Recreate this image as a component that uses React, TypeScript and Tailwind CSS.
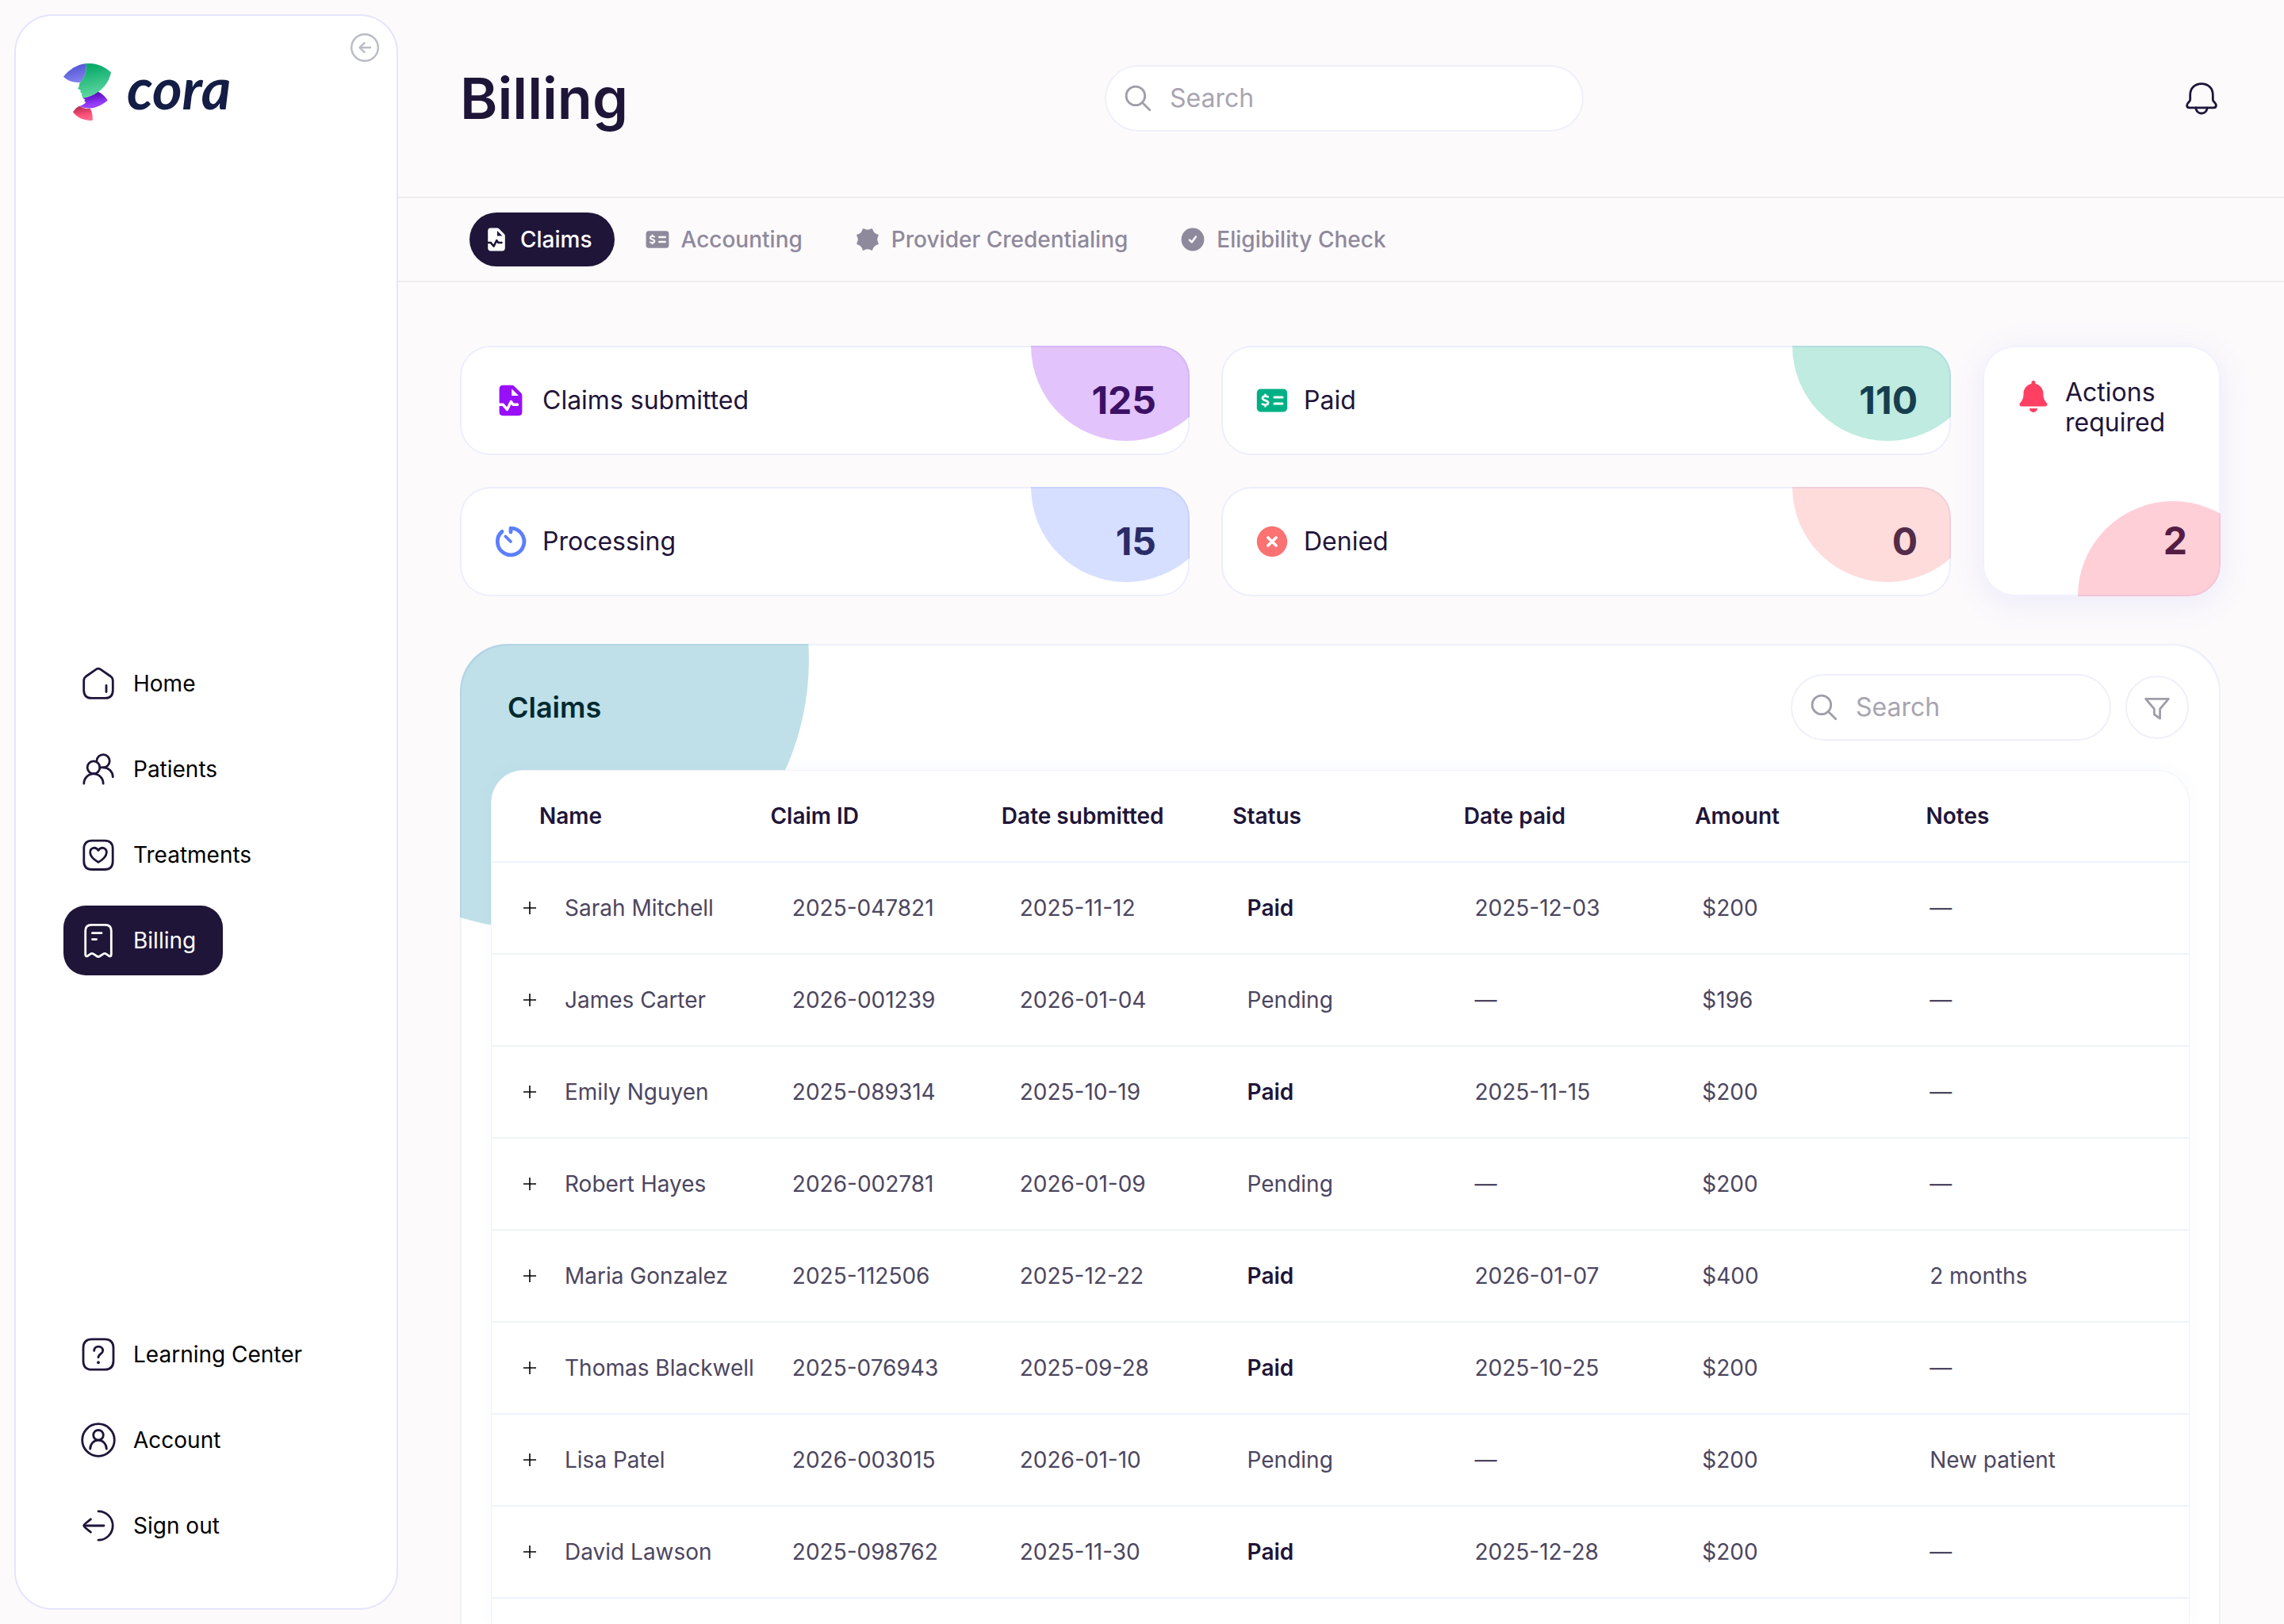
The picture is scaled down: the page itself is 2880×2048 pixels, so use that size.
import type { ReactNode } from 'react';
import clsx from 'clsx';
import { FaBell } from 'react-icons/fa6';

interface IconProps {
  className?: string;
}

function LineIcon({ className, children }: IconProps & { children: ReactNode }) {
  return (
    <svg
      className={clsx('size-12 shrink-0', className)}
      viewBox="0 0 48 48"
      fill="none"
      stroke="currentColor"
      strokeWidth="2.8"
      strokeLinecap="round"
      strokeLinejoin="round"
      aria-hidden="true"
    >
      {children}
    </svg>
  );
}

function HomeIcon() {
  return (
    <LineIcon>
      <path d="M21.2 6.1Q24 4.2 26.8 6.1L39.6 15Q42.3 17 42.3 20.4V32.4Q42.3 42.4 32.4 42.4H15.6Q5.7 42.4 5.7 32.4V20.4Q5.7 17 8.4 15Z" />
      <path d="M34 26.5V34.5" />
    </LineIcon>
  );
}

function PatientsIcon() {
  return (
    <LineIcon>
      <circle cx="18" cy="21.8" r="7.9" />
      <path d="M22 13.4A8.1 8.1 0 1 1 30.2 21.8" />
      <path d="M25.8 21.8H30.2A12.2 12.2 0 0 1 42.3 33.8" />
      <path d="M5.8 42.2A12.2 12.4 0 0 1 30.2 42.2" />
    </LineIcon>
  );
}

function TreatmentsIcon() {
  return (
    <LineIcon>
      <path d="M5.8 16.5Q5.8 6.2 16 6.2H32Q42.2 6.2 42.2 16.5V32.3Q42.2 42.5 32 42.5H16Q5.8 42.5 5.8 32.3Z" />
      <path d="M24 18.3C22 15.6 19.6 15 17.8 15.4C15 16 13.6 18.4 13.7 21.2C13.9 26.2 20 31 24 33.4C28 31 34.1 26.2 34.3 21.2C34.4 18.4 33 16 30.2 15.4C28.4 15 26 15.6 24 18.3Z" />
    </LineIcon>
  );
}

function BillingIcon() {
  return (
    <LineIcon>
      <path d="M7.7 41.5V12Q7.7 4.4 15.2 4.4H32.8Q40.3 4.4 40.3 12V41.5Q40.3 45.2 37 43.2L33.6 40.9Q32 39.8 30.4 40.9L25.6 44Q24 45.1 22.4 44L17.6 40.9Q16 39.8 14.4 40.9L11 43.2Q7.7 45.2 7.7 41.5Z" />
      <path d="M16.4 14.7H28M16.4 22.6H21.6" />
    </LineIcon>
  );
}

function LearningIcon() {
  return (
    <LineIcon>
      <path d="M5 16Q5 4.8 16 4.8H32Q43 4.8 43 16V32Q43 43.2 32 43.2H16Q5 43.2 5 32Z" />
      <path d="M18.7 19.4C18.7 16.2 21 14.1 24.2 14.1C27.4 14.1 29.7 16.2 29.7 19.2C29.7 23.4 24 23.2 24 27.8" />
      <circle cx="24" cy="34.2" r="1.9" fill="currentColor" stroke="none" />
    </LineIcon>
  );
}

function AccountIcon() {
  return (
    <LineIcon>
      <circle cx="24" cy="24" r="20.3" />
      <circle cx="24" cy="17.8" r="6.3" />
      <path d="M13.7 35.2A10.3 11.1 0 0 1 34.3 35.2" />
    </LineIcon>
  );
}

function SignOutIcon() {
  return (
    <LineIcon>
      <path d="M24 5.8A18.2 18.2 0 0 1 24 42.2" />
      <path d="M6 24H31" />
      <path d="M14.4 15.8L8.6 20.5Q5.8 22.7 5.8 24Q5.8 25.3 8.6 27.5L14.4 32.2" />
    </LineIcon>
  );
}

function BellIcon() {
  return (
    <LineIcon>
      <path d="M24 5.6C15.4 5.6 9.7 11.4 9.7 19.5V25.5C9.7 28.8 5.6 29.4 5.6 33Q5.6 35.8 8.8 35.8H39.2Q42.4 35.8 42.4 33C42.4 29.4 38.3 28.8 38.3 25.5V19.5C38.3 11.4 32.6 5.6 24 5.6Z" />
      <path d="M16.6 36C17.6 40.6 20.4 43 24 43C27.6 43 30.4 40.6 31.4 36" />
    </LineIcon>
  );
}

function SearchIcon() {
  return (
    <LineIcon className="text-[#a09ea9]">
      <circle cx="20.9" cy="20.9" r="11.8" />
      <path d="M29.5 29.5L38.8 38.8" />
    </LineIcon>
  );
}

function FilterIcon() {
  return (
    <LineIcon className="text-[#a09ea9]">
      <path d="M9.6 13.4H38.4L27.6 26V38L20.4 33V26Z" />
    </LineIcon>
  );
}

// Filled icons; `cut` is the stroke colour of the parts knocked out of the shape.
interface SolidIconProps {
  className: string;
  cut: string;
}

function FileWaveIcon({ className, cut }: SolidIconProps) {
  return (
    <svg className={className} viewBox="0 0 48 48" aria-hidden="true">
      <path
        fill="currentColor"
        fillRule="evenodd"
        d="M9.6 9.6Q9.6 4.8 14.4 4.8H25.2Q27.2 4.8 28.6 6.2L37 14.6Q38.4 16 38.4 18V38.4Q38.4 43.2 33.6 43.2H14.4Q9.6 43.2 9.6 38.4ZM25.2 9.2V18H34Z"
      />
      <path
        className={cut}
        fill="none"
        strokeWidth="3.4"
        strokeLinejoin="round"
        d="M9 29.2H14.2L19.4 35.4L24.4 25.6L27 29.2H33"
      />
      <circle className={cut} cx="32.6" cy="29.2" r="0.9" strokeWidth="1.6" />
    </svg>
  );
}

function MoneyIcon({ className, cut }: SolidIconProps) {
  return (
    <svg className={className} viewBox="0 0 48 48" aria-hidden="true">
      <rect fill="currentColor" x="4.8" y="9.6" width="38.4" height="28.8" rx="4.8" />
      <path
        className={cut}
        fill="none"
        strokeWidth="2.7"
        strokeLinecap="round"
        d="M18.8 19.4C17.8 18.9 16.7 18.7 15.4 18.7C13.2 18.7 12 19.9 12 21.3C12 24.6 19.1 23.3 19.1 26.8C19.1 28.4 17.7 29.5 15.4 29.5C14 29.5 12.8 29.1 11.9 28.6M15.5 16.8V18.7M15.5 29.5V31.3"
      />
      <path className={cut} strokeWidth="3.2" strokeLinecap="round" d="M27 20H37M27 28H37" />
    </svg>
  );
}

function SealIcon({ className }: { className: string }) {
  return (
    <svg className={className} viewBox="0 0 48 48" aria-hidden="true">
      <path
        fill="currentColor"
        stroke="currentColor"
        strokeWidth="2.6"
        strokeLinejoin="round"
        d="M16.9 6.9Q24 11.1 31.1 6.9Q33.1 14.9 41.1 16.9Q36.9 24 41.1 31.1Q33.1 33.1 31.1 41.1Q24 36.9 16.9 41.1Q14.9 33.1 6.9 31.1Q11.1 24 6.9 16.9Q14.9 14.9 16.9 6.9Z"
      />
    </svg>
  );
}

function CheckCircleIcon({ className, cut }: SolidIconProps) {
  return (
    <svg className={className} viewBox="0 0 48 48" aria-hidden="true">
      <circle fill="currentColor" cx="24" cy="24" r="19.2" />
      <path
        className={cut}
        fill="none"
        strokeWidth="3.4"
        strokeLinecap="round"
        strokeLinejoin="round"
        d="M18.6 24.8L22.4 28.6L29.2 19.4"
      />
    </svg>
  );
}

function CrossCircleIcon({ className, cut }: SolidIconProps) {
  return (
    <svg className={className} viewBox="0 0 48 48" aria-hidden="true">
      <circle fill="currentColor" cx="24" cy="24" r="19.2" />
      <path className={cut} strokeWidth="3.6" strokeLinecap="round" d="M18.9 18.9L29.1 29.1M29.1 18.9L18.9 29.1" />
    </svg>
  );
}

function TimerIcon({ className }: { className: string }) {
  return (
    <svg
      className={className}
      viewBox="0 0 48 48"
      fill="none"
      stroke="currentColor"
      strokeLinecap="round"
      strokeLinejoin="round"
      aria-hidden="true"
    >
      <path strokeWidth="4.8" d="M24 12V7.2A16.8 16.8 0 1 1 13 11.4" />
      <path strokeWidth="3.8" d="M17.4 17.4L24 24" />
    </svg>
  );
}

function LogoMark() {
  return (
    <svg className="w-[60px] h-[72px] shrink-0" viewBox="240 240 180 216" aria-hidden="true">
      <defs>
        <linearGradient id="hat-blue" x1="0.3" y1="0" x2="0.6" y2="1">
          <stop offset="0" stopColor="#4a4fd0" />
          <stop offset="1" stopColor="#8482ee" />
        </linearGradient>
        <linearGradient id="hat-green" x1="0.4" y1="0" x2="0.6" y2="1">
          <stop offset="0.1" stopColor="#0cac6c" />
          <stop offset="1" stopColor="#66dba6" />
        </linearGradient>
        <linearGradient id="neck-purple" x1="0.3" y1="0" x2="0.6" y2="1">
          <stop offset="0.1" stopColor="#5209b4" />
          <stop offset="0.8" stopColor="#9a40ff" />
        </linearGradient>
        <linearGradient id="chest-red" x1="0.4" y1="0" x2="0.6" y2="1">
          <stop offset="0" stopColor="#b0284c" />
          <stop offset="0.6" stopColor="#ff5078" />
          <stop offset="1" stopColor="#ff6a90" />
        </linearGradient>
      </defs>
      <path fill="url(#hat-blue)" d="M240 290C262 262 292 244 326 240C328 268 322 294 303 312C278 312 256 306 240 290Z" />
      <path
        fill="url(#hat-green)"
        d="M326 240C362 238 395 250 420 274C410 322 374 362 313 371L309 360L310 353L304 349L305 341L294 335C302 328 298 318 303 312C322 294 328 268 326 240Z"
      />
      <path
        fill="url(#neck-purple)"
        d="M372 347C388 355 399 365 407 380C380 402 352 412 328 409C318 408 309 406 301 402C312 398 320 393 325 387L318 381L323 377L313 371C334 368 354 360 372 347Z"
      />
      <path fill="url(#chest-red)" d="M300 401C312 409 326 412 341 411C349 424 351 440 350 456C318 457 292 446 276 424C283 413 290 406 300 401Z" />
    </svg>
  );
}

const mainNav = [
  { label: 'Home', icon: HomeIcon },
  { label: 'Patients', icon: PatientsIcon },
  { label: 'Treatments', icon: TreatmentsIcon },
  { label: 'Billing', icon: BillingIcon, active: true },
];

const footerNav = [
  { label: 'Learning Center', icon: LearningIcon },
  { label: 'Account', icon: AccountIcon },
  { label: 'Sign out', icon: SignOutIcon },
];

interface NavItem {
  label: string;
  icon: () => ReactNode;
  active?: boolean;
}

function NavList({ items, label }: { items: NavItem[]; label: string }) {
  return (
    <nav aria-label={label} className="flex flex-col items-start gap-5">
      {items.map(({ label, icon: Icon, active }) => (
        <a
          key={label}
          href="#"
          aria-current={active ? 'page' : undefined}
          className={clsx(
            'flex h-[88px] items-center gap-5 rounded-[28px] pl-5 pr-[34px] text-[28px]',
            active ? 'bg-[#1f1539] text-white' : 'text-[#1f1539]'
          )}
        >
          <Icon />
          <span className={active ? 'text-white' : 'text-black'}>{label}</span>
        </a>
      ))}
    </nav>
  );
}

function Sidebar() {
  return (
    <aside className="relative my-5 ml-5 grid w-[480px] shrink-0 grid-rows-[1fr_auto_1fr] rounded-[46px] bg-white p-[60px] ring-2 ring-[#e4e5fd]">
      <a href="#" className="flex items-start gap-5 self-start">
        <LogoMark />
        <span className="font-['Lato',sans-serif] text-[72px] leading-[60px] font-bold text-[#131d45] italic">cora</span>
      </a>
      <NavList items={mainNav} label="Main" />
      <div className="self-end">
        <NavList items={footerNav} label="Support" />
      </div>
      <button type="button" aria-label="Collapse sidebar" className="absolute top-[22px] right-[22px] text-[#b9bcc4]">
        <svg className="size-9" viewBox="0 0 36 36" fill="none" stroke="currentColor" strokeWidth="2.4" strokeLinecap="round" strokeLinejoin="round">
          <circle cx="18" cy="18" r="16.8" />
          <path d="M25 18H11.5M17.5 12.2L11.5 18L17.5 23.8" />
        </svg>
      </button>
    </aside>
  );
}

function SearchBox({ label, className }: { label: string; className: string }) {
  return (
    <label className={clsx('flex h-20 items-center gap-4 rounded-full bg-white px-4 ring-2 ring-[#eff0f9]', className)}>
      <SearchIcon />
      <input
        type="search"
        aria-label={label}
        placeholder="Search"
        className="w-full min-w-0 bg-transparent text-[32px] text-[#1f1539] outline-none placeholder:text-[#a8a5b1]"
      />
    </label>
  );
}

const tabs = [
  { label: 'Claims', active: true, icon: <FileWaveIcon className="-m-1 size-9" cut="stroke-[#1f1539]" /> },
  { label: 'Accounting', icon: <MoneyIcon className="-m-1 size-9" cut="stroke-[#fcfafb]" /> },
  { label: 'Provider Credentialing', icon: <SealIcon className="-m-1 size-9" /> },
  { label: 'Eligibility Check', icon: <CheckCircleIcon className="-m-1 size-9" cut="stroke-[#fcfafb]" /> },
];

function StatCard({ label, value, icon, blob, valueColor }: { label: string; value: number; icon: ReactNode; blob: string; valueColor: string }) {
  return (
    <section className="relative flex h-[138px] items-center justify-between overflow-hidden rounded-[38px] bg-white pr-[42px] pl-11 shadow-[inset_0_0_0_2px_#eceefc]">
      <div className={clsx('absolute -top-[120px] -right-10 size-60 rounded-full', blob)} />
      <div className="flex items-center gap-5">
        {icon}
        <h2 className="text-[32px] text-[#1f1539]">{label}</h2>
      </div>
      <p className={clsx('relative text-[48px] font-bold', valueColor)}>{value}</p>
    </section>
  );
}

const columns = ['Name', 'Claim ID', 'Date submitted', 'Status', 'Date paid', 'Amount', 'Notes'];

const claims = [
  ['Sarah Mitchell', '2025-047821', '2025-11-12', 'Paid', '2025-12-03', '$200', '—'],
  ['James Carter', '2026-001239', '2026-01-04', 'Pending', '—', '$196', '—'],
  ['Emily Nguyen', '2025-089314', '2025-10-19', 'Paid', '2025-11-15', '$200', '—'],
  ['Robert Hayes', '2026-002781', '2026-01-09', 'Pending', '—', '$200', '—'],
  ['Maria Gonzalez', '2025-112506', '2025-12-22', 'Paid', '2026-01-07', '$400', '2 months'],
  ['Thomas Blackwell', '2025-076943', '2025-09-28', 'Paid', '2025-10-25', '$200', '—'],
  ['Lisa Patel', '2026-003015', '2026-01-10', 'Pending', '—', '$200', 'New patient'],
  ['David Lawson', '2025-098762', '2025-11-30', 'Paid', '2025-12-28', '$200', '—'],
];

function ClaimsTable() {
  return (
    <table className="relative mx-10 flex flex-1 flex-col rounded-t-[40px] bg-white text-[28px] shadow-[0_0_24px_rgba(80,90,200,0.04)] ring-1 ring-[#f1f3fb]">
      <thead className="block">
        <tr className="grid h-[116px] grid-cols-7 items-center border-b-2 border-[#eff2fa] pr-10 pl-[60px] text-left text-[#1f1539]">
          {columns.map((column) => (
            <th key={column} className="font-semibold whitespace-nowrap">
              {column}
            </th>
          ))}
        </tr>
      </thead>
      <tbody className="block">
        {claims.map((claim) => (
          <tr
            key={claim[1]}
            className="grid h-[116px] grid-cols-[52px_repeat(7,minmax(0,1fr))] items-center border-b-2 border-[#eff2fa] pr-10 pl-10 text-[#4c465f]"
          >
            <td className="flex">
              <button type="button" aria-label={`Expand claim ${claim[1]}`} className="text-black">
                <svg className="size-4" viewBox="0 0 16 16" stroke="currentColor" strokeWidth="1.6">
                  <path d="M0 8H16M8 0V16" />
                </svg>
              </button>
            </td>
            {claim.map((value, i) => (
              <td key={columns[i]} className={clsx('whitespace-nowrap', value === 'Paid' && 'font-semibold text-[#1f1539]')}>
                {value}
              </td>
            ))}
          </tr>
        ))}
      </tbody>
    </table>
  );
}

function ClaimsPanel() {
  return (
    <section className="relative flex flex-1 flex-col overflow-hidden rounded-t-[60px] bg-white shadow-[inset_2px_2px_0_0_#eff1fa,inset_-2px_2px_0_0_#eff1fa]">
      <div className="absolute -top-80 -left-60 size-[680px] rounded-full bg-[#0084a3]/25" />
      <div className="relative flex items-center py-10 pr-10 pl-[60px]">
        <h2 className="mr-auto text-[36px] font-semibold text-[#012930]">Claims</h2>
        <SearchBox label="Search claims" className="w-[400px]" />
        <button type="button" aria-label="Filter claims" className="ml-5 flex size-20 items-center justify-center rounded-full border-2 border-[#eff0f9] bg-white">
          <FilterIcon />
        </button>
      </div>
      <ClaimsTable />
    </section>
  );
}

export default function App() {
  return (
    <div className="flex h-screen overflow-hidden bg-[#fcfafb] font-['Inter',sans-serif]">
      <Sidebar />
      <main className="flex min-w-0 flex-1 flex-col">
        <header className="grid h-[250px] shrink-0 grid-cols-[1fr_600px_1fr] items-center border-b-2 border-[#edecee] pr-[70px] pl-20">
          <h1 className="text-[72px] leading-[88px] font-semibold text-[#1f1539]">Billing</h1>
          <SearchBox label="Search" className="w-full" />
          <button type="button" aria-label="Notifications" className="flex size-[68px] items-center justify-center justify-self-end text-[#1f1539]">
            <BellIcon />
          </button>
        </header>

        <nav aria-label="Billing sections" className="flex h-[106px] shrink-0 items-center gap-5 border-b-2 border-[#edecee] pl-[92px]">
          {tabs.map(({ label, icon, active }) => (
            <button
              key={label}
              type="button"
              aria-current={active ? 'true' : undefined}
              className={clsx(
                'flex h-[68px] items-center gap-4 rounded-full pr-7 pl-5 text-[28px] font-medium',
                active ? 'bg-[#1f1539] text-white' : 'text-[#8f899c]'
              )}
            >
              {icon}
              {label}
            </button>
          ))}
        </nav>

        <div className="flex flex-1 flex-col gap-[60px] px-20 pt-20">
          <div className="grid grid-cols-[1fr_1fr_300px] gap-10">
            <div className="flex flex-col gap-10">
              <StatCard
                label="Claims submitted"
                value={125}
                icon={<FileWaveIcon className="-m-1 size-12 text-[#9810fa]" cut="stroke-white" />}
                blob="bg-[#9010f0]/25"
                valueColor="text-[#3b1065]"
              />
              <StatCard
                label="Processing"
                value={15}
                icon={<TimerIcon className="-m-1 size-12 text-[#5b7fff]" />}
                blob="bg-[#5b7fff]/25"
                valueColor="text-[#292c69]"
              />
            </div>
            <div className="flex flex-col gap-10">
              <StatCard
                label="Paid"
                value={110}
                icon={<MoneyIcon className="-m-1 size-12 text-[#00b085]" cut="stroke-white" />}
                blob="bg-[#00b085]/25"
                valueColor="text-[#163e50]"
              />
              <StatCard
                label="Denied"
                value={0}
                icon={<CrossCircleIcon className="-m-1 size-12 text-[#fb7272]" cut="stroke-white" />}
                blob="bg-[#fb7272]/25"
                valueColor="text-[#532c4a]"
              />
            </div>
            <div className="rounded-[40px] shadow-[0_8px_40px_rgba(90,100,240,0.1)]">
              <section className="relative flex h-full flex-col justify-between overflow-hidden rounded-[40px] bg-white py-10 pr-[42px] pl-11 shadow-[inset_0_0_0_2px_#f0f1fd]">
                <div className="absolute -right-[60px] -bottom-[120px] size-60 rounded-full bg-[#ff4063]/25" />
                <div className="flex items-start gap-5">
                  <FaBell className="mt-1 size-10 shrink-0 text-[#ff4063]" />
                  <h2 className="text-[32px] leading-[38px] text-[#1f1539]">Actions required</h2>
                </div>
                <p className="relative text-right text-[48px] leading-[60px] font-bold text-[#541d43]">2</p>
              </section>
            </div>
          </div>

          <ClaimsPanel />
        </div>
      </main>
    </div>
  );
}
